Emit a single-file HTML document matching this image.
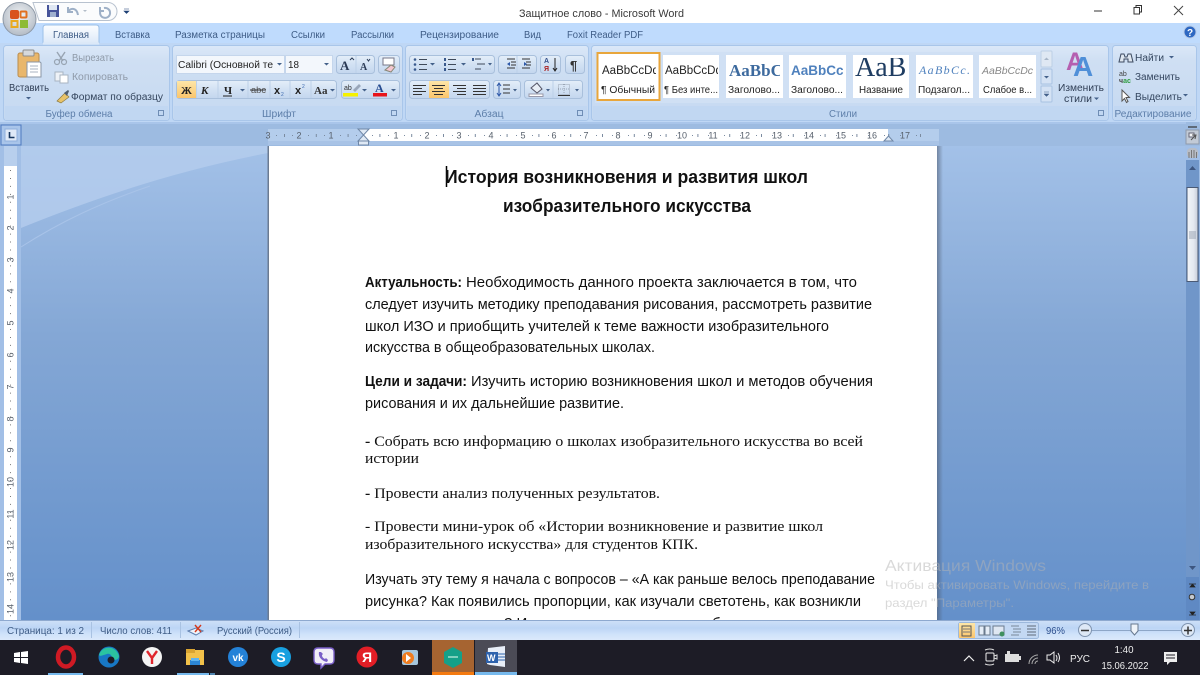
<!DOCTYPE html>
<html lang="ru"><head><meta charset="utf-8"><title>Защитное слово - Microsoft Word</title>
<style>html,body{margin:0;padding:0;background:#fff;overflow:hidden}svg.root{display:block;filter:blur(.35px)}
text{font-family:"Liberation Sans","DejaVu Sans",sans-serif}
.u{font-size:10px;fill:#3e5c86}.r{font-size:10px;fill:#222}.g{font-size:10px;fill:#8f9aa8}
.gl{font-size:10px;fill:#5d7ea9;text-anchor:middle}.d{font-size:15px;fill:#111}.s{font-family:"Liberation Serif",serif!important;font-size:15px;fill:#111}
.tb{font-size:9px;fill:#565f6b;text-anchor:middle}
</style></head><body>
<svg class="root" width="1200" height="675" viewBox="0 0 1200 675" xmlns="http://www.w3.org/2000/svg">
<defs>
<linearGradient id="cv" x1="0" y1="0" x2="0" y2="1"><stop offset="0" stop-color="#a3c1e8"/><stop offset=".4" stop-color="#84a7d5"/><stop offset="1" stop-color="#6490ca"/></linearGradient>
<linearGradient id="grp" x1="0" y1="0" x2="0" y2="1"><stop offset="0" stop-color="#dbe8f8"/><stop offset=".2" stop-color="#cfdff3"/><stop offset="1" stop-color="#c5d9f1"/></linearGradient>
<linearGradient id="btn" x1="0" y1="0" x2="0" y2="1"><stop offset="0" stop-color="#e4eef9"/><stop offset=".5" stop-color="#d2e1f3"/><stop offset="1" stop-color="#c3d6ee"/></linearGradient>
<linearGradient id="act" x1="0" y1="0" x2="0" y2="1"><stop offset="0" stop-color="#fde6a8"/><stop offset="1" stop-color="#fbc56c"/></linearGradient>
<linearGradient id="stb" x1="0" y1="0" x2="0" y2="1"><stop offset="0" stop-color="#cfe1f8"/><stop offset=".4" stop-color="#bcd5f5"/><stop offset=".7" stop-color="#cfe2fa"/><stop offset="1" stop-color="#dbe9fb"/></linearGradient>
<linearGradient id="tabg" x1="0" y1="0" x2="0" y2="1"><stop offset="0" stop-color="#fbfdff"/><stop offset="1" stop-color="#dbe8f8"/></linearGradient>
<linearGradient id="thumb" x1="0" y1="0" x2="1" y2="0"><stop offset="0" stop-color="#f2f5f9"/><stop offset=".6" stop-color="#e4e9f0"/><stop offset="1" stop-color="#c5ccd8"/></linearGradient>
<linearGradient id="shd" x1="0" y1="0" x2="1" y2="0"><stop offset="0" stop-color="#4a5568" stop-opacity=".55"/><stop offset="1" stop-color="#4a5568" stop-opacity="0"/></linearGradient>
<radialGradient id="orb" cx=".5" cy=".4" r=".6"><stop offset="0" stop-color="#f2f4f6"/><stop offset="1" stop-color="#b4bcc6"/></radialGradient>
<clipPath id="pg"><rect x="269" y="146" width="668" height="474"/></clipPath>
</defs>

<!-- title bar -->
<rect width="1200" height="23" fill="#fff"/>
<text x="519" y="17" textLength="165" lengthAdjust="spacingAndGlyphs" style="font-size:11px;fill:#3a3a3a">Защитное слово - Microsoft Word</text>
<path d="M1094 11h8" stroke="#777" stroke-width="1.500"/>
<path d="M1134 7.500h5.500v6.500h-5.500zM1136 7.500v-2h5.500v6.500h-2" fill="none" stroke="#333" stroke-width="1"/>
<path d="M1174 6l9 9M1183 6l-9 9" stroke="#444" stroke-width="1"/>
<!-- QAT -->
<path d="M33 2.500H108a9 9 0 0 1 0 18H39z" fill="#fbfcfd" stroke="#b8c2cf" stroke-width="1"/>
<rect x="47" y="5" width="12" height="12" fill="#46549a"/><rect x="49" y="5" width="8" height="5" fill="#dfe7f3"/><rect x="50" y="12" width="6" height="5" fill="#9fb0cf"/>
<path d="M68 7v5h5M68 12c3-5 9-4 10 3" fill="none" stroke="#9eb0c7" stroke-width="2"/>
<path d="M83 10h4l-2 2z" fill="#b4bdc9"/>
<path d="M100 7v4h4M101 10a5 5 0 1 0 3-2" fill="none" stroke="#9eb0c7" stroke-width="2"/>
<path d="M124 9h5M124 11h5l-2.500 2.500z" fill="#1c3f74" stroke="#1c3f74" stroke-width=".6"/>

<!-- tabs strip -->
<rect y="23" width="1200" height="20" fill="#bfdbfd"/>
<path d="M43 44v-16q0-3 3-3h50q3 0 3 3v16z" fill="url(#tabg)" stroke="#9cc0e8"/>
<text class="u" x="53" y="38" textLength="36" lengthAdjust="spacingAndGlyphs">Главная</text>
<text class="u" x="115" y="38" textLength="35" lengthAdjust="spacingAndGlyphs">Вставка</text>
<text class="u" x="175" y="38" textLength="90" lengthAdjust="spacingAndGlyphs">Разметка страницы</text>
<text class="u" x="291" y="38" textLength="34" lengthAdjust="spacingAndGlyphs">Ссылки</text>
<text class="u" x="351" y="38" textLength="43" lengthAdjust="spacingAndGlyphs">Рассылки</text>
<text class="u" x="420" y="38" textLength="79" lengthAdjust="spacingAndGlyphs">Рецензирование</text>
<text class="u" x="524" y="38" textLength="17" lengthAdjust="spacingAndGlyphs">Вид</text>
<text class="u" x="567" y="38" textLength="76" lengthAdjust="spacingAndGlyphs">Foxit Reader PDF</text>
<circle cx="1190" cy="32" r="6" fill="#2e68c2" stroke="#b9cbe6"/><text x="1190" y="36" text-anchor="middle" style="font-size:10px;font-weight:bold;fill:#fff">?</text>

<!-- orb -->
<circle cx="19.500" cy="19" r="16.500" fill="url(#orb)" stroke="#8d98a6"/>
<rect x="10" y="10" width="9" height="9" rx="2" fill="#d9531e"/><rect x="20.500" y="11.500" width="6" height="6" rx="1" fill="none" stroke="#e1701f" stroke-width="2"/>
<rect x="11.500" y="21" width="6" height="6" fill="none" stroke="#e9a91e" stroke-width="2"/><rect x="20" y="20" width="8" height="8" fill="#8dbb36"/>

<!-- ribbon -->
<rect y="43" width="1200" height="79" fill="#bfd7f5"/>
<path d="M43 43.500h56" stroke="#dbe8f8" stroke-width="2"/>
<g stroke="#a9c6ea" fill="url(#grp)">
<rect x="3.500" y="45.500" width="166" height="75" rx="3"/>
<rect x="172.500" y="45.500" width="230" height="75" rx="3"/>
<rect x="405.500" y="45.500" width="183" height="75" rx="3"/>
<rect x="591.500" y="45.500" width="517" height="75" rx="3"/>
<rect x="1112.500" y="45.500" width="84" height="75" rx="3"/>
</g>
<g fill="#c1d7f2"><rect x="5" y="106" width="163" height="14"/><rect x="174" y="106" width="227" height="14"/><rect x="407" y="106" width="180" height="14"/><rect x="593" y="106" width="514" height="14"/><rect x="1114" y="106" width="81" height="14"/></g>
<text class="gl" x="79" y="117" textLength="67" lengthAdjust="spacingAndGlyphs">Буфер обмена</text>
<text class="gl" x="279" y="117" textLength="34" lengthAdjust="spacingAndGlyphs">Шрифт</text>
<text class="gl" x="489" y="117" textLength="29" lengthAdjust="spacingAndGlyphs">Абзац</text>
<text class="gl" x="843" y="117" textLength="28" lengthAdjust="spacingAndGlyphs">Стили</text>
<text class="gl" x="1153" y="117" textLength="77" lengthAdjust="spacingAndGlyphs">Редактирование</text>
<g fill="none" stroke="#6f8db5"><rect x="158.500" y="110.500" width="5" height="5"/><rect x="391.500" y="110.500" width="5" height="5"/><rect x="577.500" y="110.500" width="5" height="5"/><rect x="1098.500" y="110.500" width="5" height="5"/></g>

<!-- clipboard -->
<rect x="18" y="53" width="21" height="24" rx="2" fill="#e9b76c" stroke="#b98c4e"/>
<rect x="23" y="50" width="11" height="6" rx="1" fill="#d6d9dc" stroke="#8d8d8d"/>
<path d="M27 62h13l1 1v14h-14z" fill="#fff" stroke="#8a96a6"/>
<path d="M30 66h8M30 69h8M30 72h8" stroke="#a8b3c1"/>
<text class="r" x="9" y="91" textLength="40" lengthAdjust="spacingAndGlyphs" style="fill:#2f3e55">Вставить</text>
<path d="M26 97h5l-2.500 2.500z" fill="#44618a"/>
<path d="M57 52l6 9M65 52l-6 9" stroke="#98a4b2" stroke-width="1.400"/><circle cx="57" cy="62" r="2.500" fill="none" stroke="#98a4b2" stroke-width="1.200"/><circle cx="64" cy="62" r="2.500" fill="none" stroke="#98a4b2" stroke-width="1.200"/>
<text class="g" x="72" y="61" textLength="42" lengthAdjust="spacingAndGlyphs">Вырезать</text>
<rect x="55" y="72" width="8" height="9" fill="#eef2f7" stroke="#a8b4c2"/><rect x="60" y="75" width="8" height="8" fill="#fff" stroke="#a8b4c2"/>
<text class="g" x="72" y="80" textLength="56" lengthAdjust="spacingAndGlyphs">Копировать</text>
<path d="M57 101l8-8 4 4-8 6z" fill="#e8c36a" stroke="#8e7a3f" stroke-width=".7"/><path d="M64 93l4-3 1 1-2 5z" fill="#4e5e72"/>
<text x="71" y="100" textLength="92" lengthAdjust="spacingAndGlyphs" style="font-size:10px;fill:#35465e">Формат по образцу</text>

<!-- font row -->
<rect x="176.500" y="55.500" width="108" height="18" fill="#f3f7fc" stroke="#c5d6ec"/>
<rect x="285.500" y="55.500" width="47" height="18" fill="#f3f7fc" stroke="#c5d6ec"/>
<text x="178" y="68" textLength="95" lengthAdjust="spacingAndGlyphs" style="font-size:10px;fill:#222">Calibri (Основной те</text>
<text x="288" y="68" textLength="11" lengthAdjust="spacingAndGlyphs" style="font-size:10px;fill:#222">18</text>
<path d="M277 63h5l-2.500 2.500zM324 63h5l-2.500 2.500z" fill="#44618a"/>
<rect x="336.500" y="55.500" width="38" height="18" rx="3" fill="url(#btn)" stroke="#a9c0dc"/><path d="M356 56v17" stroke="#bcd0e8"/>
<text x="340" y="70" style="font-family:'Liberation Serif';font-size:13px;font-weight:bold;fill:#2a3a55">A</text><path d="M350 60l2-2 2 2" stroke="#2a3a55" fill="none"/>
<text x="360" y="70" style="font-family:'Liberation Serif';font-size:10px;font-weight:bold;fill:#2a3a55">A</text><path d="M367 59l1.500 2 1.500-2" stroke="#2a3a55" fill="none"/>
<rect x="378.500" y="55.500" width="21" height="18" rx="3" fill="url(#btn)" stroke="#a9c0dc"/>
<rect x="383" y="58" width="11" height="7" fill="#fff" stroke="#778"/><path d="M385 70l6-5 4 2-4 5z" fill="#f3c6d0" stroke="#887"/>
<!-- format row -->
<rect x="176.500" y="80.500" width="160" height="18" rx="3" fill="url(#btn)" stroke="#a9c0dc"/>
<rect x="177" y="81" width="19" height="17" fill="url(#act)"/>
<path d="M196.500 81v17M218 81v17M248 81v17M270 81v17M290 81v17M311 81v17" stroke="#bcd0e8"/>
<text x="181" y="94" style="font-family:'Liberation Serif';font-size:11px;font-weight:bold;fill:#222">Ж</text>
<text x="201" y="94" style="font-family:'Liberation Serif';font-size:11px;font-weight:bold;font-style:italic;fill:#222">К</text>
<text x="224" y="94" style="font-family:'Liberation Serif';font-size:11px;font-weight:bold;fill:#222">Ч</text><path d="M223 96h9" stroke="#222"/>
<path d="M240 89h5l-2.500 2.500z" fill="#44618a"/>
<text x="251" y="93" textLength="15" lengthAdjust="spacingAndGlyphs" style="font-size:9px;fill:#555">abc</text><path d="M250 90h16" stroke="#333"/>
<text x="274" y="94" style="font-size:11px;font-weight:bold;fill:#222">x</text><text x="281" y="96" style="font-size:5px;fill:#3f6cb0">2</text>
<text x="295" y="94" style="font-size:11px;font-weight:bold;fill:#222">x</text><text x="302" y="88" style="font-size:5px;fill:#3f6cb0">2</text>
<text x="314" y="94" style="font-family:'Liberation Serif';font-size:11px;fill:#333;font-weight:bold">Aa</text><path d="M330 89h5l-2.500 2.500z" fill="#44618a"/>
<rect x="341.500" y="80.500" width="58" height="18" rx="3" fill="url(#btn)" stroke="#a9c0dc"/>
<text x="344" y="90" style="font-size:7px;fill:#333">ab</text><path d="M353 90l6-6 2 2-6 6z" fill="#9aa7ba"/>
<rect x="343" y="93" width="15" height="3.500" fill="#f5f100"/><path d="M362 89h5l-2.500 2.500z" fill="#44618a"/>
<text x="375" y="92" style="font-family:'Liberation Serif';font-size:12px;font-weight:bold;fill:#254a8f">A</text>
<rect x="373" y="93" width="14" height="3.500" fill="#e8141b"/><path d="M391 89h5l-2.500 2.500z" fill="#44618a"/>

<!-- paragraph -->
<rect x="409.500" y="55.500" width="85" height="18" rx="3" fill="url(#btn)" stroke="#a9c0dc"/>
<g stroke="#3f4a5a"><path d="M419 59.500h8M419 64.500h8M419 69.500h8M448 59.500h8M448 64.500h8M448 69.500h8"/><path d="M475 59h6M477 64h8M475 69h6"/></g>
<g fill="#39598d"><circle cx="415" cy="59.500" r="1.300"/><circle cx="415" cy="64.500" r="1.300"/><circle cx="415" cy="69.500" r="1.300"/><rect x="444" y="58" width="2" height="3"/><rect x="444" y="63" width="2" height="3"/><rect x="444" y="68" width="2" height="3"/><rect x="472" y="58" width="2" height="3"/></g>
<path d="M430 63h5l-2.500 2.500zM461 63h5l-2.500 2.500zM488 63h4l-2 2.500z" fill="#44618a"/>
<rect x="498.500" y="55.500" width="38" height="18" rx="3" fill="url(#btn)" stroke="#a9c0dc"/><path d="M517 56v17" stroke="#bcd0e8"/>
<path d="M507 59h8M511 62h5M511 65h5M507 68h8M522 59h8M526 62h5M526 65h5M522 68h8" stroke="#333"/><path d="M507 64l3-2v4zM527 64l-3-2v4z" fill="#2d58a8"/>
<rect x="540.500" y="55.500" width="20" height="18" rx="3" fill="url(#btn)" stroke="#a9c0dc"/>
<text x="544" y="63" style="font-size:7px;fill:#34508a;font-weight:bold">А</text><text x="544" y="71" style="font-size:7px;fill:#a22;font-weight:bold">Я</text><path d="M555 58v12M553 68l2 3 2-3" stroke="#222" fill="none"/>
<rect x="565.500" y="55.500" width="19" height="18" rx="3" fill="url(#btn)" stroke="#a9c0dc"/>
<text x="570" y="70" style="font-size:13px;font-weight:bold;fill:#333">¶</text>
<rect x="409.500" y="80.500" width="80" height="18" rx="3" fill="url(#btn)" stroke="#a9c0dc"/>
<rect x="429" y="81" width="20" height="17" fill="url(#act)"/>
<g stroke="#333"><path d="M413 85.500h13M413 88.500h9M413 91.500h13M413 94.500h9"/><path d="M432 85.500h13M434 88.500h9M432 91.500h13M434 94.500h9"/><path d="M453 85.500h13M457 88.500h9M453 91.500h13M457 94.500h9"/><path d="M473 85.500h13M473 88.500h13M473 91.500h13M473 94.500h13"/></g>
<rect x="493.500" y="80.500" width="27" height="18" rx="3" fill="url(#btn)" stroke="#a9c0dc"/>
<path d="M499 84v11" stroke="#2d58a8"/><path d="M497 86l2-3 2 3M497 93l2 3 2-3" stroke="#2d58a8" fill="none"/><path d="M503 85h7M503 89h7M503 93h7" stroke="#333"/><path d="M513 89h4l-2 2.500z" fill="#44618a"/>
<rect x="524.500" y="80.500" width="58" height="18" rx="3" fill="url(#btn)" stroke="#a9c0dc"/><path d="M553 81v17" stroke="#bcd0e8"/>
<path d="M531 88l6-5 5 6-5 4z" fill="#e8eef6" stroke="#556"/><rect x="529" y="94" width="14" height="2.500" fill="#fff" stroke="#99a"/><path d="M546 89h4l-2 2.500z" fill="#44618a"/>
<g stroke="#9aa5b4" fill="none"><rect x="558.500" y="84.500" width="11" height="10" stroke-dasharray="1 1"/><path d="M564 84v10M558 89h11" stroke-dasharray="1 1"/></g><path d="M558 95.500h12" stroke="#333"/><path d="M575 89h4l-2 2.500z" fill="#44618a"/>

<!-- styles -->
<rect x="595" y="52" width="445" height="51" fill="#d0e0f4"/>
<g fill="#fff"><rect x="663" y="55" width="56" height="43"/><rect x="726" y="55" width="57" height="43"/><rect x="789" y="55" width="57" height="43"/><rect x="853" y="55" width="56" height="43"/><rect x="916" y="55" width="57" height="43"/><rect x="979" y="55" width="57" height="43"/></g>
<rect x="597.500" y="53" width="62" height="47" fill="#fff" stroke="#e8a63c" stroke-width="2"/>
<svg x="599" y="55" width="57" height="26"><text x="3" y="19" style="font-size:11.500px;fill:#222">AaBbCcDd</text></svg>
<svg x="664" y="55" width="54" height="26"><text x="1" y="19" style="font-size:11.500px;fill:#222">AaBbCcDd</text></svg>
<svg x="728" y="55" width="52" height="26"><text x="1" y="21" style="font-family:'Liberation Serif';font-size:17px;font-weight:bold;fill:#3d6a9e">AaBbCc</text></svg>
<svg x="791" y="55" width="53" height="26"><text x="0" y="20" style="font-size:13.500px;font-weight:bold;fill:#4f81bd">AaBbCc</text></svg>
<svg x="853" y="58" width="54" height="22"><text x="2" y="18" style="font-family:'Liberation Serif';font-size:28px;fill:#1f3d62">AaB</text></svg>
<text x="919" y="74" textLength="51" lengthAdjust="spacing" style="font-family:'Liberation Serif';font-size:12px;font-style:italic;fill:#4f81bd">AaBbCc.</text>
<text x="982" y="74" textLength="51" lengthAdjust="spacing" style="font-size:10.500px;font-style:italic;fill:#888">AaBbCcDc</text>
<text class="r" x="601" y="93" textLength="54" lengthAdjust="spacingAndGlyphs">¶ Обычный</text>
<text class="r" x="664" y="93" textLength="54" lengthAdjust="spacingAndGlyphs">¶ Без инте...</text>
<text class="r" x="728" y="93" textLength="52" lengthAdjust="spacingAndGlyphs">Заголово...</text>
<text class="r" x="791" y="93" textLength="52" lengthAdjust="spacingAndGlyphs">Заголово...</text>
<text class="r" x="859" y="93" textLength="44" lengthAdjust="spacingAndGlyphs">Название</text>
<text class="r" x="918" y="93" textLength="52" lengthAdjust="spacingAndGlyphs">Подзагол...</text>
<text class="r" x="983" y="93" textLength="49" lengthAdjust="spacingAndGlyphs">Слабое в...</text>
<rect x="1041" y="51" width="11" height="16" rx="1" fill="#dfe8f3" stroke="#bccfe6"/><path d="M1044 60h5l-2.500-2.500z" fill="#a8b6c8"/>
<rect x="1041" y="69" width="11" height="15" rx="1" fill="#d4e2f4" stroke="#a9c3e2"/><path d="M1044 76h5l-2.500 2.500z" fill="#44618a"/>
<rect x="1041" y="86" width="11" height="16" rx="1" fill="#d4e2f4" stroke="#a9c3e2"/><path d="M1044 92h5M1044 94h5l-2.500 2.500z" fill="#44618a" stroke="#44618a" stroke-width=".5"/>
<text x="1066" y="70" style="font-size:25px;font-weight:bold;fill:#b55fb0">A</text>
<text x="1073" y="76" style="font-size:28px;fill:#4f8fd8;font-weight:bold">A</text>
<text class="r" x="1058" y="91" textLength="46" lengthAdjust="spacingAndGlyphs" style="fill:#2f3e55">Изменить</text>
<text class="r" x="1064" y="102" textLength="28" lengthAdjust="spacingAndGlyphs" style="fill:#2f3e55">стили</text><path d="M1094 97.500h5l-2.500 2.500z" fill="#44618a"/>

<!-- editing -->
<path d="M1119 62l2-8h3l1 3h2l1-3h3l2 8h-5v-3h-4v3z" fill="#dfe7f0" stroke="#3c4a60"/>
<text class="r" x="1135" y="61" textLength="29" lengthAdjust="spacingAndGlyphs" style="fill:#34465f">Найти</text><path d="M1169 56h5l-2.500 2.500z" fill="#44618a"/>
<text x="1119" y="76" style="font-size:7px;fill:#444">ab</text><text x="1119" y="83" style="font-size:7px;font-weight:bold;fill:#444">ч<tspan fill="#2f9c3f">ac</tspan></text>
<text class="r" x="1135" y="80" textLength="45" lengthAdjust="spacingAndGlyphs" style="fill:#34465f">Заменить</text>
<path d="M1122 90v11l2.500-2.500 2 4 1.500-1-2-4h3.500z" fill="#fff" stroke="#555"/>
<text class="r" x="1135" y="100" textLength="47" lengthAdjust="spacingAndGlyphs" style="fill:#34465f">Выделить</text><path d="M1183 94h5l-2.500 2.500z" fill="#44618a"/>

<!-- ruler band -->
<rect y="122" width="1200" height="24" fill="#9dbbe1"/>
<rect y="122" width="1200" height="2" fill="#a9c5ea"/>
<rect x="1" y="125" width="20" height="20" fill="#a9c5ea" stroke="#4d79c0"/>
<rect x="5" y="129" width="12" height="12" fill="#dfe9f7" stroke="#8fb0dc"/>
<path d="M9.500 132v5.500h5" fill="none" stroke="#16365f" stroke-width="1.600"/>
<rect x="268" y="129" width="671" height="12" fill="#b4cdec"/>
<rect x="363" y="129" width="525" height="12" fill="#fff"/>
<rect x="268" y="141" width="671" height="4" fill="#a8c3e6"/>
<g>
<text class="tb" x="268" y="138.500">3</text><text class="tb" x="299" y="138.500">2</text><text class="tb" x="331" y="138.500">1</text><text class="tb" x="396" y="138.500">1</text><text class="tb" x="427" y="138.500">2</text><text class="tb" x="459" y="138.500">3</text><text class="tb" x="491" y="138.500">4</text><text class="tb" x="523" y="138.500">5</text><text class="tb" x="554" y="138.500">6</text><text class="tb" x="586" y="138.500">7</text><text class="tb" x="618" y="138.500">8</text><text class="tb" x="650" y="138.500">9</text><text class="tb" x="682" y="138.500">10</text><text class="tb" x="713" y="138.500">11</text><text class="tb" x="745" y="138.500">12</text><text class="tb" x="777" y="138.500">13</text><text class="tb" x="809" y="138.500">14</text><text class="tb" x="841" y="138.500">15</text><text class="tb" x="872" y="138.500">16</text><text class="tb" x="905" y="138.500">17</text></g>
<g stroke="#7b8ba0" fill="none"><path d="M276 135.500H930" stroke-dasharray="1 15"/><path d="M292 135.500H930" stroke-dasharray="1 31" opacity="0"/><path d="M284 135.500H930" stroke-width="3" stroke-dasharray="1 30.800"/></g>
<path d="M358 129h11l-5.500 6zM358 141h11l-5.500-6z" fill="#dfe9f5" stroke="#6f87a6"/><rect x="358.500" y="141" width="10" height="4" fill="#dfe9f5" stroke="#6f87a6"/>
<path d="M884 141l4.500-5 4.500 5z" fill="#dfe9f5" stroke="#6f87a6"/>

<!-- canvas -->
<rect y="146" width="1200" height="474" fill="url(#cv)"/>
<path d="M21 228C100 196 180 170 268 153V146H21z" fill="#b5cdee" opacity=".8"/>
<path d="M21 247C60 222 100 203 150 186" fill="none" stroke="#a8c3e8" stroke-width="1"/>
<rect x="0" y="146" width="21" height="474" fill="#a2bfe6"/>
<rect x="4" y="146" width="13" height="20" fill="#b8cfed"/>
<rect x="4" y="166" width="13" height="454" fill="#fff"/>
<g>
<text class="tb" transform="translate(13.500 197) rotate(-90)">1</text><text class="tb" transform="translate(13.500 228) rotate(-90)">2</text><text class="tb" transform="translate(13.500 260) rotate(-90)">3</text><text class="tb" transform="translate(13.500 291) rotate(-90)">4</text><text class="tb" transform="translate(13.500 323) rotate(-90)">5</text><text class="tb" transform="translate(13.500 355) rotate(-90)">6</text><text class="tb" transform="translate(13.500 387) rotate(-90)">7</text><text class="tb" transform="translate(13.500 419) rotate(-90)">8</text><text class="tb" transform="translate(13.500 450) rotate(-90)">9</text><text class="tb" transform="translate(13.500 482) rotate(-90)">10</text><text class="tb" transform="translate(13.500 514) rotate(-90)">11</text><text class="tb" transform="translate(13.500 545) rotate(-90)">12</text><text class="tb" transform="translate(13.500 577) rotate(-90)">13</text><text class="tb" transform="translate(13.500 609) rotate(-90)">14</text>
</g>
<path d="M10.500 170V620" stroke="#777" stroke-dasharray="1 6.950"/>

<!-- page -->
<rect x="267.500" y="146" width="1.500" height="474" fill="#6b7b92"/>
<rect x="937" y="146" width="6" height="474" fill="url(#shd)"/>
<rect x="269" y="146" width="668" height="474" fill="#fff"/>
<g clip-path="url(#pg)">
<path d="M446.500 166v21" stroke="#000" stroke-width="1.500"/>
<text x="445" y="183" textLength="363" lengthAdjust="spacingAndGlyphs" style="font-size:18px;font-weight:bold;fill:#111">История возникновения и развития школ</text>
<text x="503" y="212" textLength="248" lengthAdjust="spacingAndGlyphs" style="font-size:18px;font-weight:bold;fill:#111">изобразительного искусства</text>

<text class="d" x="365" y="287" textLength="97" lengthAdjust="spacingAndGlyphs" style="font-weight:bold">Актуальность:</text>
<text class="d" x="466" y="287" textLength="391" lengthAdjust="spacingAndGlyphs">Необходимость данного проекта заключается в том, что</text>
<text class="d" x="365" y="309" textLength="507" lengthAdjust="spacingAndGlyphs">следует изучить методику преподавания рисования, рассмотреть развитие</text>
<text class="d" x="365" y="331" textLength="464" lengthAdjust="spacingAndGlyphs">школ ИЗО и приобщить учителей к теме важности изобразительного</text>
<text class="d" x="365" y="352" textLength="290" lengthAdjust="spacingAndGlyphs">искусства в общеобразовательных школах.</text>
<text class="d" x="365" y="386" textLength="102" lengthAdjust="spacingAndGlyphs" style="font-weight:bold">Цели и задачи:</text>
<text class="d" x="471" y="386" textLength="402" lengthAdjust="spacingAndGlyphs">Изучить историю возникновения школ и методов обучения</text>
<text class="d" x="365" y="408" textLength="259" lengthAdjust="spacingAndGlyphs">рисования и их дальнейшие развитие.</text>

<text class="s" x="365" y="446" textLength="498" lengthAdjust="spacingAndGlyphs"><tspan font-weight="bold">-</tspan> Собрать всю информацию о школах изобразительного искусства во всей</text>
<text class="s" x="365" y="463" textLength="54" lengthAdjust="spacingAndGlyphs">истории</text>
<text class="s" x="365" y="498" textLength="295" lengthAdjust="spacingAndGlyphs"><tspan font-weight="bold">-</tspan> Провести анализ полученных результатов.</text>
<text class="s" x="365" y="531" textLength="458" lengthAdjust="spacingAndGlyphs">- Провести мини-урок об «Истории возникновение и развитие школ</text>
<text class="s" x="365" y="549" textLength="333" lengthAdjust="spacingAndGlyphs">изобразительного искусства» для студентов КПК.</text>

<text class="d" x="365" y="584" textLength="510" lengthAdjust="spacingAndGlyphs">Изучать эту тему я начала с вопросов – «А как раньше велось преподавание</text>
<text class="d" x="365" y="606" textLength="496" lengthAdjust="spacingAndGlyphs">рисунка? Как появились пропорции, как изучали светотень, как возникли</text>
<text class="d" x="504" y="628">? И</text>
<text class="d" x="712" y="628">б</text>
</g>

<!-- scrollbar -->
<rect x="1186" y="122" width="13" height="24" fill="#9dbbe1"/>
<rect x="1185" y="146" width="14" height="14" fill="#a2bfe6"/>
<path d="M1188 127h9" stroke="#333" stroke-width="1.200"/>
<rect x="1186" y="130" width="13" height="14" fill="#c2cad6" stroke="#8f9aaa"/>
<rect x="1189" y="133" width="5" height="4" fill="#f2f4f7" stroke="#667"/><path d="M1191 140l5-5M1195 139l1-4-4 0" stroke="#555" fill="none"/>
<rect x="1187" y="148" width="11" height="10" rx="4" fill="#b8bdc6"/>
<path d="M1189 158v-6M1191.500 158v-8M1194 158v-8M1196.500 158v-6" stroke="#777" stroke-width="1"/>
<rect x="1186" y="160" width="13" height="460" fill="#7096c9"/>
<path d="M1189 170h7l-3.500-4z" fill="#3d5680"/>
<rect x="1187" y="187.500" width="11" height="94" fill="url(#thumb)" stroke="#4a5a75"/>
<path d="M1189 232h7M1189 234h7M1189 236h7M1189 238h7" stroke="#99a3b2"/>
<path d="M1189 566h7l-3.500 4z" fill="#3d5680"/>
<rect x="1186" y="577" width="13" height="43" fill="#5f89c3"/>
<path d="M1189 584h7M1190 587h5l-2.500-3z" stroke="#222" fill="#222" stroke-width=".7"/>
<circle cx="1192" cy="597" r="2.800" fill="#c4c9cf" stroke="#333"/>
<path d="M1189 615h7M1190 612h5l-2.500 3z" stroke="#222" fill="#222" stroke-width=".7"/>

<!-- status bar -->
<rect y="620" width="1200" height="20" fill="url(#stb)"/>
<rect y="620" width="1200" height="1" fill="#8ea9cf"/>
<text class="u" x="7" y="634" textLength="77" lengthAdjust="spacingAndGlyphs">Страница: 1 из 2</text>
<text class="u" x="100" y="634" textLength="72" lengthAdjust="spacingAndGlyphs">Число слов: 411</text>
<text class="u" x="217" y="634" textLength="75" lengthAdjust="spacingAndGlyphs">Русский (Россия)</text>
<path d="M91.500 622v16M180.500 622v16M299.500 622v16" stroke="#a9c2e2"/>
<path d="M188 631l8 4 7-4-7-3z" fill="#eef4fb" stroke="#5f7fb0"/><path d="M195 625l6 7M201 625l-6 7" stroke="#d4381c" stroke-width="1.400"/>
<rect x="958.500" y="622.500" width="80" height="16" rx="2" fill="#c3d8f3" stroke="#9cb8dc"/>
<rect x="959" y="623" width="16" height="15" fill="url(#act)"/>
<rect x="962" y="626" width="9" height="10" fill="none" stroke="#555"/><path d="M963 629h7M963 632h7" stroke="#777"/>
<path d="M979 626h5v9h-5zM985 626h5v9h-5z" fill="#e5edf7" stroke="#6a7a8e"/>
<rect x="993" y="626" width="11" height="9" fill="#dfe7f2" stroke="#6a7a8e"/><circle cx="1002" cy="634" r="2.500" fill="#3f8f5f"/>
<path d="M1011 626h8M1013 629h8M1013 632h8M1011 635h8" stroke="#7a8798"/>
<path d="M1027 626h9M1027 629h9M1027 632h9M1027 635h9" stroke="#5f6a7a"/>
<text x="1046" y="634" textLength="19" lengthAdjust="spacingAndGlyphs" style="font-size:10px;fill:#2c4f8e">96%</text>
<path d="M1085 630.500h103" stroke="#8da6c7"/>
<circle cx="1085" cy="630" r="6.500" fill="#dde8f6" stroke="#7f94b0"/><path d="M1081 630.500h8" stroke="#333" stroke-width="1.500"/>
<circle cx="1188" cy="630" r="6.500" fill="#dde8f6" stroke="#7f94b0"/><path d="M1184 630.500h8M1188 626.500v8" stroke="#333" stroke-width="1.500"/>
<path d="M1131 624h7v7l-3.500 4-3.500-4z" fill="#eef3f9" stroke="#66788f"/>

<!-- taskbar -->
<rect y="640" width="1200" height="35" fill="#1d1c26"/>
<path d="M14 653l6-1v5h-6zM21 652l7-1v6h-7zM14 658h6v5l-6-1zM21 658h7v6l-7-1z" fill="#fff"/>
<ellipse cx="66" cy="657" rx="8" ry="9.500" fill="none" stroke="#cf1a24" stroke-width="4.500"/>
<rect x="48" y="673" width="35" height="2" fill="#76b9ed"/>
<circle cx="109" cy="657" r="10.500" fill="#1877c4"/><path d="M99 655c3-10 17-10 20 1 0 4-5 5-8 3 2-3-1-6-4-5-4 1-7 3-8 1z" fill="#2bc3a0"/><circle cx="111" cy="660" r="3.500" fill="#1d1c26"/>
<circle cx="152" cy="657" r="10" fill="#f4f4f4"/><path d="M147 651l5 7v6M157 651l-5 7" fill="none" stroke="#e0262d" stroke-width="2.400"/>
<rect x="186" y="650" width="18" height="15" fill="#f2c14a"/><rect x="186" y="649" width="9" height="4" fill="#d9a431"/><rect x="190" y="660" width="10" height="5" fill="#2c86d6"/><path d="M191 658h8v3h-8z" fill="#5fb4ef"/>
<rect x="177" y="673" width="32" height="2" fill="#76b9ed"/><rect x="210" y="673" width="5" height="2" fill="#4f83ad"/>
<circle cx="238" cy="657" r="10" fill="#2482d8"/><text x="238" y="661" text-anchor="middle" style="font-size:10px;font-weight:bold;fill:#fff">vk</text>
<circle cx="281" cy="657" r="10" fill="#18a0e0"/><text x="281" y="662" text-anchor="middle" style="font-size:14px;font-weight:bold;fill:#fff">S</text>
<path d="M318 648h12q4 0 4 4v8q0 4-4 4h-5l-4 4v-4h-3q-4 0-4-4v-8q0-4 4-4z" fill="#f1eef8" stroke="#7a5fc8" stroke-width="1.400"/><path d="M319 652c-1 5 3 9 8 10l1-2-2-2-1 1c-2-1-3-2-3-4l1-1-2-2z" fill="#7a5fc8"/>
<circle cx="367" cy="657" r="10.500" fill="#e21e26"/><text x="367" y="662" text-anchor="middle" style="font-size:14px;font-weight:bold;fill:#fff">Я</text>
<rect x="402" y="650" width="16" height="15" rx="2" fill="#a6c6dc"/><circle cx="408" cy="658" r="6" fill="#ef7c1f"/><path d="M406 654l5 4-5 4z" fill="#fff"/>
<rect x="432" y="640" width="42" height="35" fill="#a66431"/><rect x="432" y="672" width="42" height="3" fill="#f47a10"/>
<path d="M453 647l9 5v11l-9 5-9-5v-11z" fill="#15a088"/><rect x="448" y="656" width="10" height="2" fill="#7fd0bd"/>
<rect x="475" y="640" width="42" height="35" fill="#4b4b56"/><rect x="475" y="672" width="42" height="3" fill="#76b9ed"/>
<path d="M488 648l17-2v21l-15 -2-3-1z" fill="#e8eef8"/><rect x="486" y="652" width="12" height="11" fill="#2d62ad"/><text x="487" y="661" style="font-size:9px;font-weight:bold;fill:#fff">W</text><path d="M498 654h7M498 657h7M498 660h7" stroke="#2d62ad"/>
<!-- tray -->
<path d="M964 661l5-5 5 5" fill="none" stroke="#eee" stroke-width="1.200"/>
<rect x="986" y="653" width="8" height="8" rx="1" fill="none" stroke="#eee"/><path d="M985 650q5-2 9 0M985 664q5 2 9 0M994 656l3-1v4l-3-1" stroke="#ddd" fill="none"/>
<rect x="1005" y="654" width="14" height="8" fill="#ddd"/><rect x="1007" y="651" width="3" height="3" fill="#ddd"/><path d="M1019 656h2v4h-2" fill="#ddd"/>
<path d="M1029 664a9 9 0 0 1 9-9M1032 664a6 6 0 0 1 6-6M1035 664a3 3 0 0 1 3-3" fill="none" stroke="#aaa"/>
<path d="M1047 655h3l4-3v11l-4-3h-3z" fill="none" stroke="#eee"/><path d="M1056 655q2 3 0 6M1058 653q3 5 0 9" stroke="#eee" fill="none"/>
<text x="1080" y="662" text-anchor="middle" textLength="20" lengthAdjust="spacingAndGlyphs" style="font-size:10px;fill:#eee">РУС</text>
<text x="1124" y="653" text-anchor="middle" textLength="19" lengthAdjust="spacingAndGlyphs" style="font-size:10px;fill:#eee">1:40</text>
<text x="1125" y="669" text-anchor="middle" textLength="47" lengthAdjust="spacingAndGlyphs" style="font-size:10px;fill:#eee">15.06.2022</text>
<path d="M1164 652h13v10h-7l-3 3v-3h-3z" fill="#eee"/><path d="M1166 655h9M1166 658h9" stroke="#1d1c26"/>

<!-- activation watermark -->
<text x="885" y="571" textLength="161" lengthAdjust="spacingAndGlyphs" style="font-size:16px;fill:#b4b4b4;fill-opacity:.5">Активация Windows</text>
<text x="885" y="589" textLength="264" lengthAdjust="spacingAndGlyphs" style="font-size:12px;fill:#b4b4b4;fill-opacity:.5">Чтобы активировать Windows, перейдите в</text>
<text x="885" y="607" textLength="129" lengthAdjust="spacingAndGlyphs" style="font-size:12px;fill:#b4b4b4;fill-opacity:.5">раздел "Параметры".</text>
</svg>
</body></html>
